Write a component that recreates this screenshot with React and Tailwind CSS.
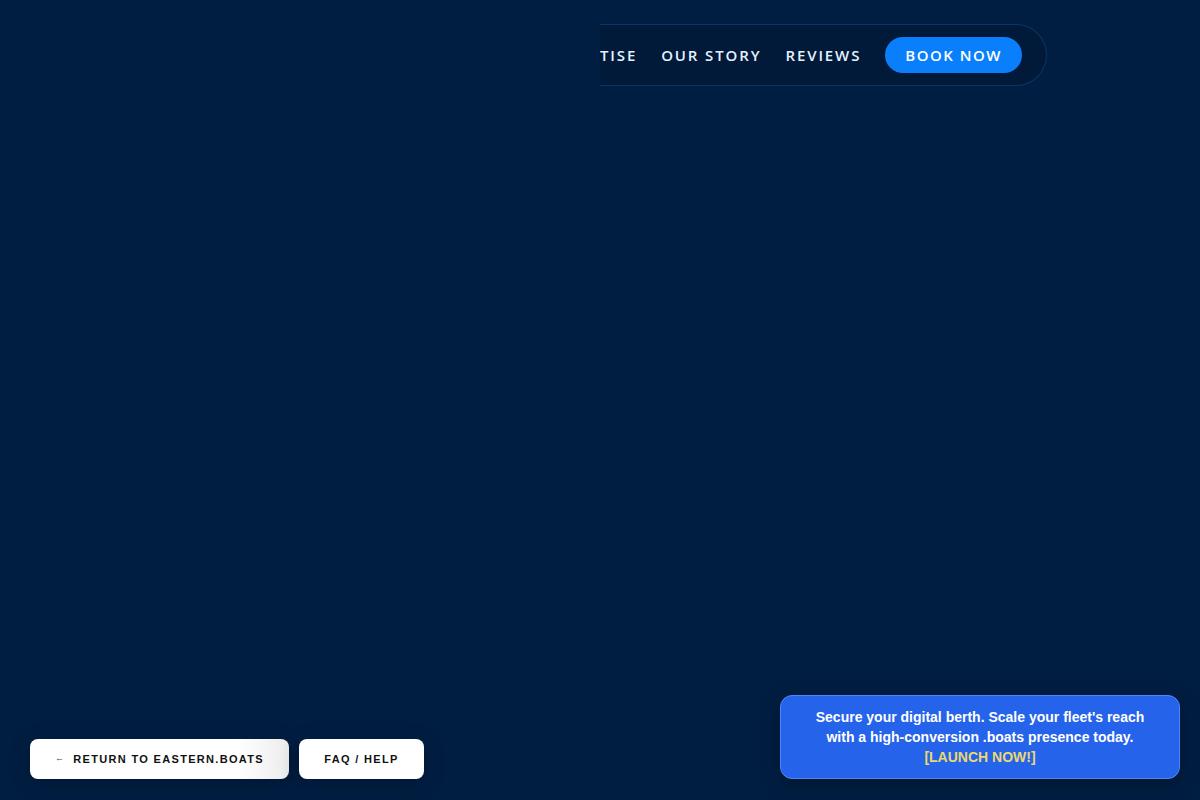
import React from 'react';

const navLinks = ['EXPERTISE', 'OUR STORY', 'REVIEWS'];

const App = () => {
    return (
        <div className="relative w-full h-[800px] bg-[#001e42] overflow-hidden font-['Liberation_Sans',Arial,sans-serif]">
            <header className="flex pt-6 pl-[600px]">
                <nav className="w-[447px] h-[62px] overflow-hidden rounded-r-full border-y border-r border-[#0d3564] bg-[#011a3a] flex items-center justify-end pr-6">
                    <div className="flex items-center gap-6 whitespace-nowrap font-['Open_Sans',sans-serif] text-[15px] font-semibold tracking-[0.125em] text-[#e4f2ff]">
                        {navLinks.map((link) => (
                            <a key={link} href="#" className="hover:text-white">
                                {link}
                            </a>
                        ))}
                        <button className="h-9 px-5 rounded-full bg-[#0a7ffb] text-white tracking-[0.1em]">
                            BOOK NOW
                        </button>
                    </div>
                </nav>
            </header>

            {/* Bottom left actions */}
            <div className="absolute left-[30px] bottom-[21px] flex gap-[10px]">
                <button className="h-10 w-[259px] rounded-lg bg-gradient-to-r from-white from-80% to-[#ececec] shadow-[0_4px_20px_rgba(0,0,0,0.25)] flex items-center pl-[25px] text-[11px] font-bold tracking-[0.12em] text-[#111]">
                    <span className="text-[9px] mr-2 text-[#444]">←</span>
                    RETURN TO EASTERN.BOATS
                </button>
                <button className="h-10 w-[125px] rounded-lg bg-white shadow-[0_4px_20px_rgba(0,0,0,0.25)] flex items-center justify-center text-[11px] font-bold tracking-[0.12em] text-[#111]">
                    FAQ / HELP
                </button>
            </div>

            {/* Promo banner */}
            <div className="absolute right-5 bottom-[21px] w-[400px] rounded-xl border border-[#4d86f5] bg-[#2563eb] py-[11px] px-8 text-center text-[14px] leading-5 font-bold text-white shadow-[0_4px_20px_rgba(0,0,0,0.3)]">
                Secure your digital berth. Scale your fleet's reach with a high-conversion .boats presence today.
                <br />
                <a href="#" className="text-[#ebd86e]">[LAUNCH NOW!]</a>
            </div>
        </div>
    );
};

export default App;
